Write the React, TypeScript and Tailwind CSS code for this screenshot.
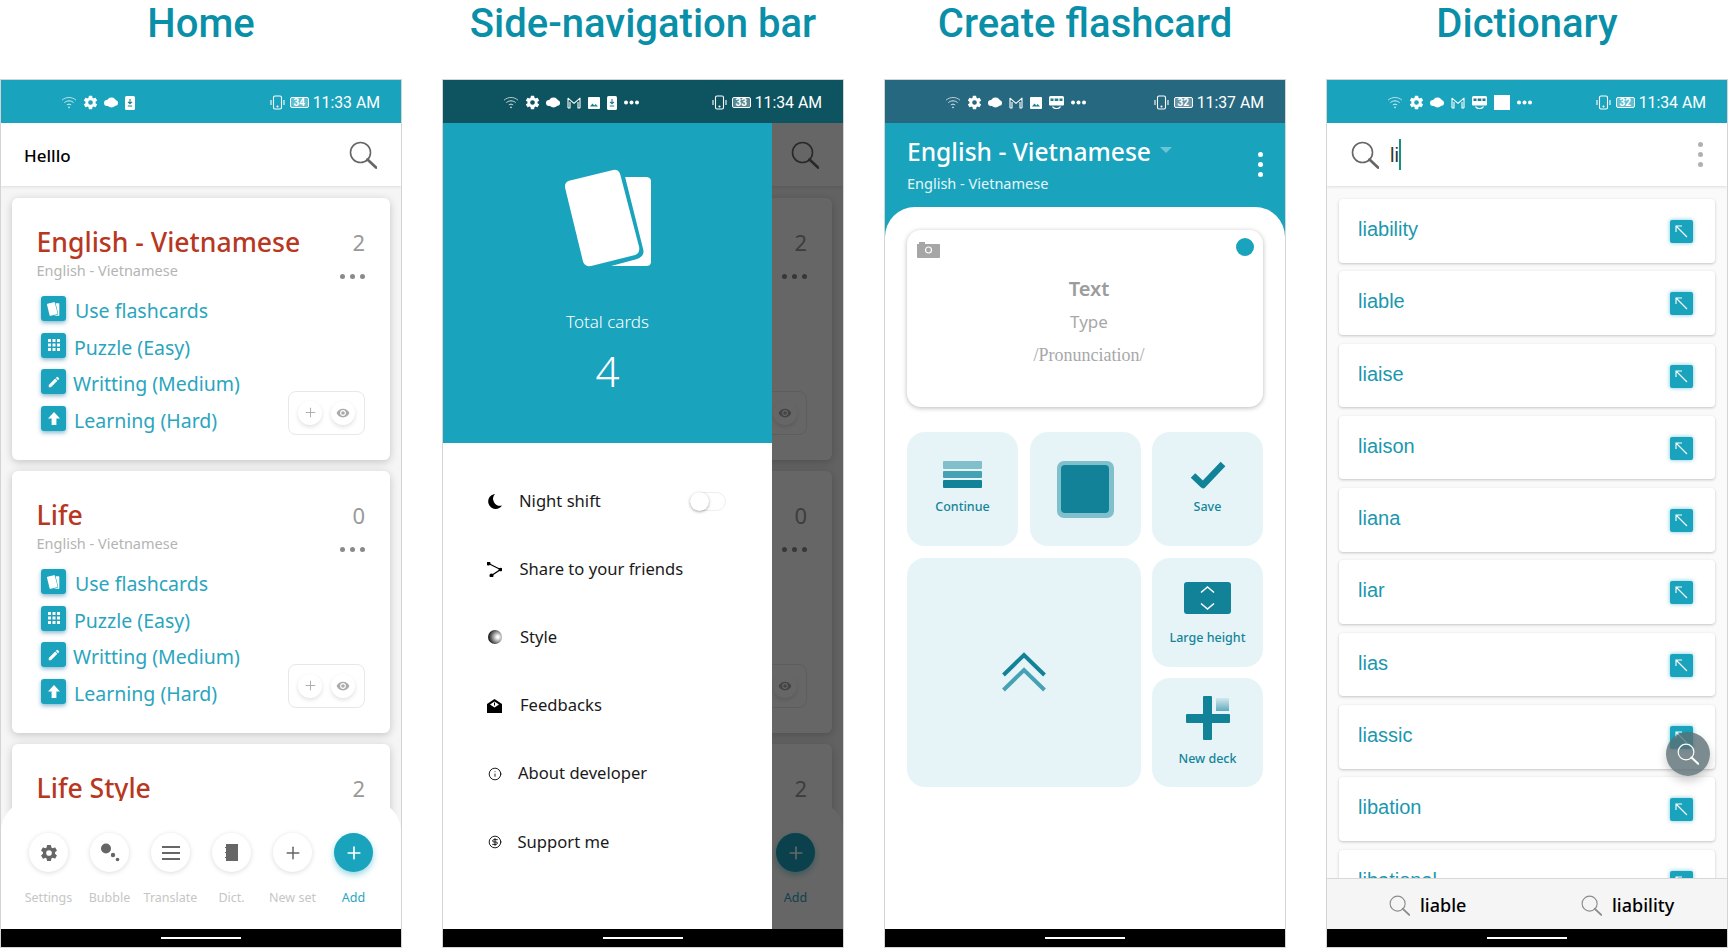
import { ReactNode } from "react"
import { IoSettingsSharp } from "react-icons/io5"
import { MdApps, MdEdit, MdVisibility } from "react-icons/md"
import { Info, CircleDollarSign, Plus } from "lucide-react"

const teal = "#19a3bd"

function SearchIcon({ size = 28, color = "#666", width = 1.6 }: { size?: number; color?: string; width?: number }) {
  return (
    <svg width={size} height={size} viewBox="0 0 28 28" fill="none">
      <circle cx="11.5" cy="11.5" r="10" stroke={color} strokeWidth={width} />
      <path d="M18.5 18.5 L27 26.5" stroke={color} strokeWidth={width * 1.7} strokeLinecap="round" />
    </svg>
  )
}

function Wifi() {
  return (
    <svg width="16" height="13" viewBox="0 0 16 13" fill="none" stroke="#fff" strokeWidth="1" opacity="0.85">
      <path d="M1 4.2C5 .6 11 .6 15 4.2" strokeWidth="0.8" />
      <path d="M3.4 6.6C6 4.3 10 4.3 12.6 6.6" />
      <path d="M5.8 9C7 7.9 9 7.9 10.2 9" />
      <circle cx="8" cy="11.4" r="0.8" fill="#fff" stroke="none" />
    </svg>
  )
}

function Blob() {
  return (
    <svg width="14" height="11" viewBox="0 0 14 11" fill="#fff">
      <ellipse cx="7.5" cy="5.5" rx="5" ry="5" />
      <ellipse cx="3" cy="6" rx="3" ry="3" />
      <ellipse cx="11.5" cy="6" rx="2.5" ry="2.8" />
    </svg>
  )
}

function Gmail() {
  return (
    <svg width="14" height="12" viewBox="0 0 14 12" fill="none" stroke="#fff" strokeWidth="1.1">
      <path d="M1 11V1.2L7 6.4 13 1.2V11M1 11h2V5M13 11h-2V5" strokeLinejoin="round" />
    </svg>
  )
}

function ImageGlyph() {
  return (
    <svg width="12" height="12" viewBox="0 0 12 12">
      <rect width="12" height="12" rx="1" fill="#fff" />
      <path d="M2 9.5 4.5 6.5 6.3 8.4 7.6 7 10 9.5Z" fill="#1a7f92" />
    </svg>
  )
}

function Bus() {
  return (
    <svg width="15" height="13" viewBox="0 0 15 13" fill="#fff">
      <path d="M1.5 0H13.5Q15 0 15 1.5V8.5Q15 9.5 14 9.5H1Q0 9.5 0 8.5V1.5Q0 0 1.5 0Z" />
      <path d="M1.5 2.5h3v2.5h-3zM5.7 2.5h3.6v2.5H5.7zM10.5 2.5h3v2.5h-3z" fill="#1a7f92" />
      <path d="M3.5 10.5C5 13.3 10 13.3 11.5 10.5" fill="none" stroke="#fff" strokeWidth="1.2" />
    </svg>
  )
}

function MoreDots() {
  return (
    <svg width="15" height="5" viewBox="0 0 15 5" fill="#fff">
      <circle cx="2" cy="2.5" r="2" />
      <circle cx="7.5" cy="2.5" r="2" />
      <circle cx="13" cy="2.5" r="2" />
    </svg>
  )
}

function PhoneDown() {
  return (
    <svg width="10" height="14" viewBox="0 0 10 14">
      <rect x="0" y="0" width="10" height="14" rx="1.5" fill="#fff" />
      <path d="M5 3v4.5M3 5.8 5 7.8 7 5.8M2.8 10h4.4" stroke="#1a7f92" strokeWidth="1.1" fill="none" />
    </svg>
  )
}

function StatusBar({ time, battery, color, icons }: { time: string; battery: string; color: string; icons: ReactNode }) {
  return (
    <div className="flex h-[43px] shrink-0 items-center justify-between pl-[60px] pr-[21px] pt-[2px] text-white" style={{ backgroundColor: color }}>
      <div className="flex items-center gap-[7px]">{icons}</div>
      <div className="flex items-center font-['Roboto',sans-serif] text-[15.8px]">
        <svg width="15" height="15" viewBox="0 0 15 15" fill="none" stroke="#fff" strokeWidth="1.1">
          <rect x="3.5" y="1" width="8" height="13" rx="1.5" />
          <path d="M1 5v5M14 5v5" />
          <circle cx="7.5" cy="11.5" r="0.5" fill="#fff" />
        </svg>
        <span className="ml-[5px] mr-[4px] flex h-[11px] w-[19px] items-center justify-center rounded-[2px] border border-white bg-white/30 text-[10px] font-bold leading-none">{battery}</span>
        <span>{time}</span>
      </div>
    </div>
  )
}

const baseIcons = (
  <>
    <Wifi />
    <IoSettingsSharp size={15} color="#fff" className="-mx-px" />
    <Blob />
  </>
)

function IconSquare({ children }: { children: ReactNode }) {
  return (
    <div className="flex h-[25px] w-[25px] shrink-0 items-center justify-center rounded-[3px] bg-[#1ba2bd] shadow-[0_2px_4px_rgba(25,120,160,0.5)]">
      {children}
    </div>
  )
}

function CardsGlyph({ size = 14 }: { size?: number }) {
  return (
    <svg width={size * 0.88} height={size} viewBox="0 0 86 98" fill="#fff">
      <path d="M3 12 L48 1 Q53 0 55 5 L74 78 Q75 84 70 86 L26 97 Q20 98 18 93 L0 19 Q-1 14 3 12Z" />
      <path d="M60 8H81Q86 8 86 13V92Q86 97 81 97H46L72 90Q80 87 78 80Z" />
    </svg>
  )
}

const rows = [
  { label: "Use flashcards", ml: "ml-[9px]", icon: <CardsGlyph /> },
  { label: "Puzzle (Easy)", ml: "ml-[8px]", icon: <MdApps size={18} color="#fff" /> },
  { label: "Writting (Medium)", ml: "ml-[7px]", icon: <MdEdit size={14} color="#fff" /> },
  {
    label: "Learning (Hard)",
    ml: "ml-[8px]",
    icon: (
      <svg width="12" height="13" viewBox="0 0 12 13" fill="#fff">
        <path d="M6 0 12 6.5H8.4V13H3.6V6.5H0Z" />
      </svg>
    ),
  },
]

// covered: the drawer lies over the left part of the card, so its texts are not painted
function DeckCard({ title, count, compact, covered }: { title: string; count: string; compact?: boolean; covered?: boolean }) {
  const hide = covered ? "invisible" : ""
  return (
    <div className="h-[262px] w-[378px] shrink-0 rounded-[6px] bg-white pl-[24.5px] pr-[25px] pt-[25px] shadow-[0_2px_8px_rgba(0,0,0,0.2)]">
      <div className="flex justify-between">
        <div className={`pt-[3px] ${hide}`}>
          <div className="text-[26.6px] font-medium leading-[33px] text-[#b8371f]">{title}</div>
          {!compact && <div className="text-[14.5px] leading-[22px] text-[#b4b4b4]">English - Vietnamese</div>}
        </div>
        <div className="flex flex-col items-end">
          <div className="text-[22px] leading-[38px] text-[#999]">{count}</div>
          {!compact && (
            <div className="mt-[13px] flex gap-[5px]">
              <span className="h-[5px] w-[5px] rounded-full bg-[#8a8a8a]" />
              <span className="h-[5px] w-[5px] rounded-full bg-[#8a8a8a]" />
              <span className="h-[5px] w-[5px] rounded-full bg-[#8a8a8a]" />
            </div>
          )}
        </div>
      </div>
      {!compact && (
        <div className="mt-[15px] flex items-end justify-between">
          <div className={`ml-[4.5px] ${hide}`}>
            {rows.map((r) => (
              <div key={r.label} className="flex h-[36.7px] items-start">
                <IconSquare>{r.icon}</IconSquare>
                <span className={`${r.ml} mt-[2px] text-[19.5px] leading-[26px] text-[#2aa5be]`}>{r.label}</span>
              </div>
            ))}
          </div>
          <div className="mb-[8px] flex h-[44px] w-[77px] items-center justify-center gap-[9px] rounded-[8px] border border-[#e8e8e8]">
            <span className="flex h-[24px] w-[24px] items-center justify-center rounded-full bg-white shadow-[0_2px_4px_rgba(0,0,0,0.12)]">
              <Plus size={15} color="#aaa" strokeWidth={1.5} />
            </span>
            <span className="flex h-[24px] w-[24px] items-center justify-center rounded-full bg-white shadow-[0_2px_4px_rgba(0,0,0,0.12)]">
              <MdVisibility size={14} color="#aaa" />
            </span>
          </div>
        </div>
      )}
    </div>
  )
}

const navItems = [
  { label: "Settings", icon: <IoSettingsSharp size={18} color="#666" /> },
  {
    label: "Bubble",
    icon: (
      <svg width="20" height="20" viewBox="0 0 20 20" fill="#666">
        <circle cx="6" cy="5.5" r="5" />
        <circle cx="13" cy="12" r="2.2" />
        <circle cx="17.5" cy="16.5" r="1.8" />
      </svg>
    ),
  },
  {
    label: "Translate",
    icon: (
      <svg width="18" height="14" viewBox="0 0 18 14" fill="#666">
        <rect y="0" width="18" height="2" />
        <rect y="6" width="18" height="2" />
        <rect y="12" width="18" height="2" />
      </svg>
    ),
  },
  {
    label: "Dict.",
    icon: (
      <svg width="13" height="17" viewBox="0 0 13 17" fill="#666">
        <path d="M1 0H13V17H1V14H0V13H1V9H0V8H1V4H0V3H1Z" />
      </svg>
    ),
  },
  { label: "New set", icon: <Plus size={20} color="#666" strokeWidth={1.8} /> },
]

function BottomNav({ covered }: { covered?: boolean }) {
  return (
    <div className="absolute inset-x-0 bottom-0 grid h-[128px] grid-cols-6 rounded-t-[30px] bg-white px-[17px] pt-[32px]">
      {navItems.map((n) => (
        <div key={n.label} className={`flex flex-col items-center ${covered ? "invisible" : ""}`}>
          <span className="flex h-[39px] w-[39px] items-center justify-center rounded-full bg-white shadow-[0_1px_5px_rgba(0,0,0,0.14)]">{n.icon}</span>
          <span className="mt-[17px] whitespace-nowrap text-[12.5px] leading-[18px] text-[#c6c6c6]">{n.label}</span>
        </div>
      ))}
      <div className="flex flex-col items-center">
        <span className="flex h-[39px] w-[39px] items-center justify-center rounded-full bg-[#19a3bd] shadow-[0_3px_6px_rgba(25,163,189,0.45)]">
          <Plus size={20} color="#fff" strokeWidth={2} />
        </span>
        <span className="mt-[17px] text-[12.5px] leading-[18px] text-[#2aa5be]">Add</span>
      </div>
    </div>
  )
}

function HomeScreen({ covered, children }: { covered?: boolean; children?: ReactNode }) {
  return (
    <div className="relative flex-1 overflow-hidden bg-[#f5f5f5]">
      <div className="flex h-[63px] items-center justify-between bg-white pl-[23px] pr-[24px] shadow-[0_1px_3px_rgba(0,0,0,0.1)]">
        <span className={`pt-[2px] text-[17px] font-medium text-black ${covered ? "invisible" : ""}`}>Helllo</span>
        <SearchIcon />
      </div>
      <div className="flex flex-col gap-[11px] pl-[11px] pt-[12px]">
        <DeckCard title="English - Vietnamese" count="2" covered={covered} />
        <DeckCard title="Life" count="0" covered={covered} />
        <DeckCard title="Life Style" count="2" compact covered={covered} />
      </div>
      <BottomNav covered={covered} />
      {children}
    </div>
  )
}

const menu = [
  {
    label: "Night shift",
    icon: (
      <svg width="15" height="15" viewBox="0 0 15 15">
        <path d="M8 0A7.5 7.5 0 1 0 15 11.5 7 7 0 0 1 8 0Z" fill="#000" />
      </svg>
    ),
    ml: "ml-[17px]",
  },
  {
    label: "Share to your friends",
    icon: (
      <svg width="15" height="15" viewBox="0 0 15 15" fill="none" stroke="#000" strokeWidth="1.3">
        <path d="M1.5 1.5 13.5 7.5 4.5 13.5" />
        <circle cx="1.5" cy="1.5" r="1.4" fill="#000" />
        <circle cx="13.5" cy="7.5" r="1.2" fill="#000" />
        <circle cx="4.5" cy="13.5" r="1.4" fill="#000" />
      </svg>
    ),
    ml: "ml-[17.5px]",
  },
  {
    label: "Style",
    icon: <span className="h-[14px] w-[14px] rounded-full bg-[radial-gradient(circle_at_70%_50%,#fff_8%,#999_40%,#111_80%)]" />,
    ml: "ml-[18px]",
  },
  {
    label: "Feedbacks",
    icon: (
      <svg width="15" height="14" viewBox="0 0 15 14" fill="#000">
        <path d="M0 5 7.5 0 15 5V14H0Z" />
        <path d="M3 5.5 7.5 2.5 12 5.5 7.5 8.5Z" fill="#fff" />
        <path d="M7 3.5h1v3H7z" />
      </svg>
    ),
    ml: "ml-[18px]",
  },
  { label: "About developer", icon: <Info size={14} color="#000" strokeWidth={1.5} />, ml: "ml-[16px]" },
  { label: "Support me", icon: <CircleDollarSign size={14} color="#000" strokeWidth={1.5} />, ml: "ml-[15.5px]" },
]

function Drawer() {
  return (
    <div className="absolute inset-y-0 left-0 w-[329px] bg-white">
      <div className="flex h-[320px] flex-col items-center bg-[#19a3bd] pt-[46px] text-white">
        <span className="ml-[1px] flex">
          <CardsGlyph size={98} />
        </span>
        <div className="mt-[43px] text-[17px] font-light leading-[24px]">Total cards</div>
        <div className="mt-[11px] text-[42px] font-light leading-[52px]">4</div>
      </div>
      <div className="pl-[44px] pr-[46px] pt-[24px]">
        {menu.map((m) => (
          <div key={m.label} className="flex h-[68.2px] items-center">
            <span className="flex w-[15px] shrink-0 justify-center">{m.icon}</span>
            <span className={`${m.ml} flex-1 text-[16.6px] text-[#1a1a1a]`}>{m.label}</span>
            {m.label === "Night shift" && (
              <span className="relative h-[19px] w-[36px] rounded-full border border-[#eee] bg-white">
                <span className="absolute -left-px -top-px h-[19px] w-[19px] rounded-full bg-white shadow-[0_1px_3px_rgba(0,0,0,0.35)]" />
              </span>
            )}
          </div>
        ))}
      </div>
    </div>
  )
}

function ActionTile({ label, icon, className }: { label?: string; icon: ReactNode; className?: string }) {
  return (
    <div className={`flex flex-col items-center rounded-[18px] bg-[#e6f4f8] ${className ?? ""}`}>
      {icon}
      {label && <span className="mt-auto text-[12.5px] font-medium leading-[18px] text-[#148499]">{label}</span>}
    </div>
  )
}

function CreateScreen() {
  return (
    <div className="flex flex-1 flex-col bg-[#19a3bd]">
      <div className="relative h-[84px] shrink-0 pl-[22px] text-white">
        <div className="flex items-center pt-[10px]">
          <span className="text-[24.6px] font-medium leading-[38px]">English - Vietnamese</span>
          <span className="ml-[9px] mt-[-4px] h-0 w-0 border-x-[6px] border-t-[6px] border-x-transparent border-t-[#6cc5d6]" />
        </div>
        <div className="pt-[1px] text-[14.5px] leading-[22px] text-white/90">English - Vietnamese</div>
        <div className="absolute right-[22px] top-[29px] flex flex-col gap-[5px]">
          <span className="h-[5px] w-[5px] rounded-full bg-white" />
          <span className="h-[5px] w-[5px] rounded-full bg-white" />
          <span className="h-[5px] w-[5px] rounded-full bg-white" />
        </div>
      </div>
      <div className="flex-1 rounded-t-[30px] bg-white px-[22px] pt-[23px]">
        <div className="relative flex h-[177px] w-[356px] flex-col items-center rounded-[14px] bg-white pl-[8px] pt-[46px] shadow-[0_1px_5px_rgba(0,0,0,0.28)]">
          <svg className="absolute left-[10px] top-[11px]" width="23" height="17" viewBox="0 0 23 17" fill="#a6a6a6">
            <path d="M0 3H2V1H8V3H22Q23 3 23 4V16Q23 17 22 17H1Q0 17 0 16Z" />
            <circle cx="11.5" cy="9" r="3" fill="none" stroke="#fff" strokeWidth="1.2" />
          </svg>
          <span className="absolute right-[9px] top-[8px] h-[18px] w-[18px] rounded-full bg-[#19a3bd]" />
          <div className="text-[20px] font-semibold leading-[26px] text-[#9c9c9c]">Text</div>
          <div className="mt-[7px] text-[17px] leading-[26px] text-[#a8a8a8]">Type</div>
          <div className="mt-[7px] font-['Liberation_Serif',serif] text-[18px] leading-[26px] text-[#a8a8a8]">/Pronunciation/</div>
        </div>
        <div className="mt-[25px] grid w-[356px] grid-cols-3 grid-rows-[114px_109px_109px] gap-[11.5px]">
          <ActionTile
            label="Continue"
            className="pb-[30px] pt-[29px]"
            icon={
              <div className="flex w-[39px] flex-col gap-[2px]">
                <span className="h-[8px] rounded-[1px] bg-[#81bfca]" />
                <span className="h-[7px] rounded-[1px] bg-[#45a2b4]" />
                <span className="h-[8px] rounded-[1px] bg-[#128299]" />
              </div>
            }
          />
          <ActionTile
            className="justify-center"
            icon={
              <div className="flex h-[57px] w-[57px] items-center justify-center rounded-[7px] bg-[#80bfcc]">
                <span className="h-[48px] w-[48px] rounded-[4px] bg-[#128299]" />
              </div>
            }
          />
          <ActionTile
            label="Save"
            className="pb-[30px] pt-[29px]"
            icon={
              <svg width="36" height="28" viewBox="0 0 36 28" fill="none">
                <path d="M3 14.5 13 24 33 3" stroke="#128299" strokeWidth="6.5" strokeLinejoin="round" />
              </svg>
            }
          />
          <ActionTile
            className="col-span-2 row-span-2 justify-center"
            icon={
              <svg width="44" height="40" viewBox="0 0 44 40" fill="none" strokeWidth="4">
                <path d="M1.5 23 22 3 42.5 23" stroke="#128299" />
                <path d="M1.5 38 22 18 42.5 38" stroke="#45a2b4" />
              </svg>
            }
          />
          <ActionTile
            label="Large height"
            className="pb-[20px] pt-[24px]"
            icon={
              <svg width="47" height="32" viewBox="0 0 47 32" fill="none">
                <rect width="47" height="32" rx="3" fill="#128299" />
                <path d="M17 10.5 23.5 5 30 10.5M17 21.5 23.5 27 30 21.5" stroke="#fff" strokeWidth="1.5" />
              </svg>
            }
          />
          <ActionTile
            label="New deck"
            className="pb-[19px] pt-[18px]"
            icon={
              <div className="relative h-[44px] w-[44px]">
                <span className="absolute left-[17.5px] top-0 h-[44px] w-[9px] rounded-[1px] bg-[#128299]" />
                <span className="absolute left-0 top-[18px] h-[9px] w-[44px] rounded-[1px] bg-[#128299]" />
                <span className="absolute left-[30px] top-[2px] h-[13px] w-[13px] bg-gradient-to-b from-[#d3e8ee] to-[#5fabbd]" />
              </div>
            }
          />
        </div>
      </div>
    </div>
  )
}

const words = ["liability", "liable", "liaise", "liaison", "liana", "liar", "lias", "liassic", "libation", "libational"]

function DictionaryScreen() {
  return (
    <div className="relative flex flex-1 flex-col overflow-hidden bg-[#fafafa]">
      <div className="flex h-[63px] shrink-0 items-center bg-white pl-[24px] pr-[24px] shadow-[0_1px_3px_rgba(0,0,0,0.12)]">
        <SearchIcon />
        <span className="ml-[11px] flex h-[31px] items-center font-['Liberation_Sans',sans-serif] text-[20px] text-[#333]">li</span>
        <span className="h-[31px] w-[2px] bg-[#1a8f80]" />
        <div className="ml-auto flex flex-col gap-[5px]">
          <span className="h-[5px] w-[5px] rounded-full bg-[#b0b0b0]" />
          <span className="h-[5px] w-[5px] rounded-full bg-[#b0b0b0]" />
          <span className="h-[5px] w-[5px] rounded-full bg-[#b0b0b0]" />
        </div>
      </div>
      <div className="flex flex-1 flex-col gap-[8.8px] overflow-hidden pl-[12px] pt-[13px]">
        {words.map((w) => (
          <div key={w} className="flex h-[63.5px] w-[376px] shrink-0 items-start justify-between rounded-[4px] bg-white pl-[19px] pr-[22px] shadow-[0_1px_3px_rgba(0,0,0,0.22)]">
            <span className="mt-[15px] font-['Liberation_Sans',sans-serif] text-[20px] leading-[30px] text-[#1b97ae]">{w}</span>
            <span className="mt-[21px] flex h-[23px] w-[23px] items-center justify-center rounded-[2px] bg-[#19a3bd] shadow-[0_0_4px_rgba(25,163,189,0.6)]">
              <svg width="13" height="13" viewBox="0 0 13 13" fill="none" stroke="#fff" strokeWidth="1.1">
                <path d="M1 7V1H7M1 1 12 12" />
              </svg>
            </span>
          </div>
        ))}
      </div>
      <div className="flex h-[51px] shrink-0 items-center border-t border-[#d8d8d8] bg-[#f5f5f5] pl-[62px] pt-[2px] text-[18px] font-medium text-black">
        <SearchIcon size={21} color="#8c8c8c" width={1.5} />
        <span className="ml-[10px] w-[161px]">liable</span>
        <SearchIcon size={21} color="#8c8c8c" width={1.5} />
        <span className="ml-[10px]">liability</span>
      </div>
      <div className="absolute left-[339px] top-[609px] flex h-[44px] w-[44px] items-center justify-center rounded-full bg-[#5a6e73]/80 shadow-[0_5px_10px_rgba(0,0,0,0.2)]">
        <SearchIcon size={22} color="#fff" width={1.5} />
      </div>
    </div>
  )
}

function Column({ title, children }: { title: string; children: ReactNode }) {
  return (
    <div className="w-[402px] shrink-0">
      <h1 className="flex h-[79px] items-start justify-center pt-[1px] font-['Roboto',sans-serif] text-[40px] font-medium leading-[46px] text-[#0a8fa9]">{title}</h1>
      <div className="relative flex h-[869px] flex-col overflow-hidden border border-[#d4d4d4] bg-white">
        {children}
        <div className="flex h-[18px] shrink-0 items-center justify-center bg-black">
          <span className="h-[2px] w-[80px] bg-white" />
        </div>
      </div>
    </div>
  )
}

export default function App() {
  return (
    <div className="flex h-[948px] w-[1728px] gap-[40px] overflow-hidden bg-white font-['Noto_Sans',sans-serif]">
      <Column title="Home">
        <StatusBar
          time="11:33 AM"
          battery="34"
          color={teal}
          icons={
            <>
              {baseIcons}
              <PhoneDown />
            </>
          }
        />
        <HomeScreen />
      </Column>
      <Column title="Side-navigation bar">
        <StatusBar
          time="11:34 AM"
          battery="33"
          color="#0e5360"
          icons={
            <>
              {baseIcons}
              <Gmail />
              <ImageGlyph />
              <PhoneDown />
              <MoreDots />
            </>
          }
        />
        <HomeScreen covered>
          <div className="absolute inset-0 bg-black/60" />
          <Drawer />
        </HomeScreen>
      </Column>
      <Column title="Create flashcard">
        <StatusBar
          time="11:37 AM"
          battery="32"
          color="#26687f"
          icons={
            <>
              {baseIcons}
              <Gmail />
              <ImageGlyph />
              <Bus />
              <MoreDots />
            </>
          }
        />
        <CreateScreen />
      </Column>
      <Column title="Dictionary">
        <StatusBar
          time="11:34 AM"
          battery="32"
          color={teal}
          icons={
            <>
              {baseIcons}
              <Gmail />
              <Bus />
              <span className="h-[15px] w-[16px] bg-white" />
              <MoreDots />
            </>
          }
        />
        <DictionaryScreen />
      </Column>
    </div>
  )
}
